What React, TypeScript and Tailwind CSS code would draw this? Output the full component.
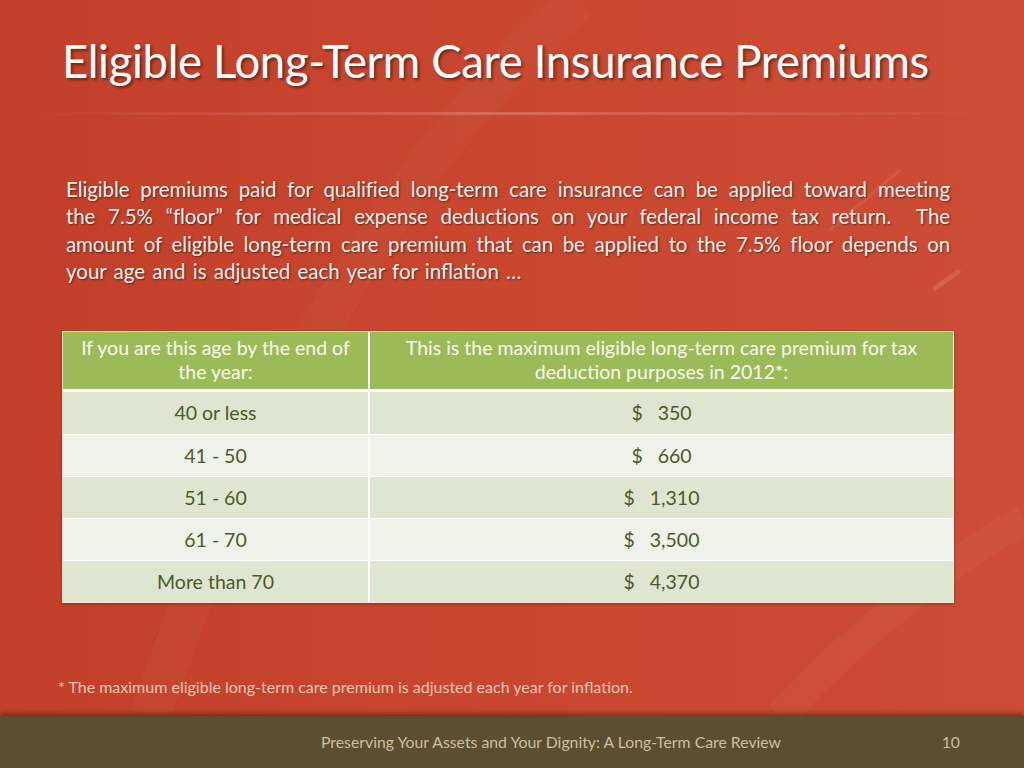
import React from "react";

const rows = [
  { age: "40 or less", amount: "350" },
  { age: "41 - 50", amount: "660" },
  { age: "51 - 60", amount: "1,310" },
  { age: "61 - 70", amount: "3,500" },
  { age: "More than 70", amount: "4,370" },
];

const intro = [
  "Eligible premiums paid for qualified long-term care insurance can be applied toward meeting",
  "the 7.5% “floor” for medical expense deductions on your federal income tax return.\u00a0 The",
  "amount of eligible long-term care premium that can be applied to the 7.5% floor depends on",
];

const font = { fontFamily: "Lato, 'Open Sans', sans-serif" };

function Swooshes() {
  // decorative light streaks of the slide background
  return (
    <svg
      className="absolute inset-0 pointer-events-none"
      width="1024"
      height="716"
      viewBox="0 0 1024 716"
    >
      <defs>
        <linearGradient id="sep" x1="0" x2="1" y1="0" y2="0">
          <stop offset="0" stopColor="#fff" stopOpacity="0" />
          <stop offset="0.5" stopColor="#fff" stopOpacity="0.2" />
          <stop offset="1" stopColor="#fff" stopOpacity="0" />
        </linearGradient>
      </defs>
      <path d="M150 716 C 250 420, 400 150, 580 0" stroke="#fff" strokeOpacity="0.025" strokeWidth="40" fill="none" />
      <path d="M830 230 L 900 170" stroke="#fff" strokeOpacity="0.08" strokeWidth="3" />
      <path d="M935 288 L 958 272" stroke="#fff" strokeOpacity="0.12" strokeWidth="5" strokeLinecap="round" />
      <path d="M780 716 C 850 640, 950 560, 1024 520" stroke="#fff" strokeOpacity="0.03" strokeWidth="30" fill="none" />
      <rect x="20" y="112" width="990" height="3" fill="url(#sep)" />
    </svg>
  );
}

export default function App() {
  return (
    <div
      className="relative w-[1024px] h-[768px] overflow-hidden flex flex-col bg-gradient-to-r from-[#c2402a] via-[#c9472f] to-[#cd4c35]"
      style={font}
    >
      <Swooshes />
      <div className="relative flex-1 flex flex-col">
        <h1 className="pl-[62px] pt-[35px] text-[45.5px] leading-[52px] text-white [text-shadow:2px_2px_3px_rgba(0,0,0,0.45)] tracking-[-0.35px]">
          Eligible Long-Term Care Insurance Premiums
        </h1>

        <div className="mt-[89px] ml-[66px] w-[884px] text-[20.5px] leading-[27.4px] tracking-[-0.1px] text-[#fbf1ec] [text-shadow:1px_1px_2px_rgba(0,0,0,0.5)]">
          {intro.map((line) => (
            <div key={line} className="text-justify [text-align-last:justify] whitespace-nowrap">
              {line}
            </div>
          ))}
          <div className="[word-spacing:2px] tracking-normal">your age and is adjusted each year for inflation …</div>
        </div>

        <div className="mt-[45px] ml-[62px] w-[892px] border border-[#f3e4d6] shadow-[0_1px_3px_rgba(0,0,0,0.3)]">
          <div className="grid grid-cols-[307px_1fr] bg-[#9bbb59] text-[#f7f9f0] text-[19.5px] leading-[24px] h-[60px] border-b-[3px] border-white">
            <div className="flex flex-col items-center justify-center text-center border-r-2 border-white whitespace-nowrap">
              <span>If you are this age by the end of</span>
              <span>the year:</span>
            </div>
            <div className="flex flex-col items-center justify-center text-center whitespace-nowrap">
              <span>This is the maximum eligible long-term care premium for tax</span>
              <span>deduction purposes in 2012*:</span>
            </div>
          </div>
          {rows.map((r, i) => (
            <div
              key={r.age}
              className={`grid grid-cols-[307px_1fr] h-[42px] text-[19.5px] text-[#4b5a2b] ${
                i % 2 === 0 ? "bg-[#dee6d1]" : "bg-[#eef2e9]"
              } ${i > 0 ? "border-t border-white" : ""}`}
            >
              <div className="flex items-center justify-center border-r-2 border-white">{r.age}</div>
              <div className="flex items-center justify-center whitespace-pre">
                {"$   " + r.amount}
              </div>
            </div>
          ))}
        </div>

        <div className="mt-auto mb-[17px] ml-[58px] text-[16px] text-[#f4c6b6]">
          * The maximum eligible long-term care premium is adjusted each year for inflation.
        </div>
      </div>

      <div className="relative h-[52px] bg-[#5c4f31] shadow-[0_-3px_5px_rgba(0,0,0,0.35)] flex items-center text-[15.8px] text-[#cbbf9f]">
        <div className="ml-[310px] w-[482px] text-center whitespace-nowrap">
          Preserving Your Assets and Your Dignity: A Long-Term Care Review
        </div>
        <div className="ml-auto mr-[64px]">10</div>
      </div>
    </div>
  );
}
